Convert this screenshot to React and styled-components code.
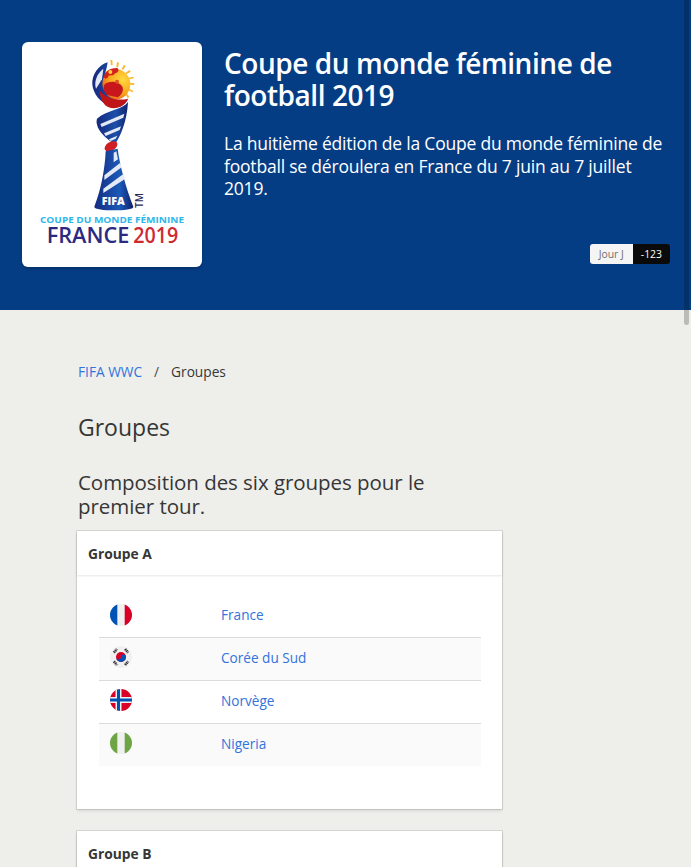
import styled, { createGlobalStyle } from "styled-components"

const GlobalStyle = createGlobalStyle`
html, body {
    margin: 0;
    padding: 0;
    background: #eeeeea;
    scrollbar-width: none;
}
html::-webkit-scrollbar {
    display: none;
}
body {
    font-family: "Open Sans", "Noto Sans", sans-serif;
    color: #363636;
}
`

const Hero = styled.header`
display: flex;
gap: 22px;
box-sizing: border-box;
height: 310px;
padding: 42px 21px 0 22px;
background: #053d85;
color: white;
`

const LogoCard = styled.div`
display: flex;
justify-content: center;
flex: none;
box-sizing: border-box;
width: 180px;
height: 225px;
padding-top: 8px;
background: white;
border-radius: 6px;
box-shadow: 0 2px 3px rgba(10, 10, 10, 0.2);
`

const HeroInfo = styled.div`
display: flex;
flex-direction: column;
flex: 1;
height: 222px;
`

const HeroTitle = styled.h1`
margin: 5px 0 0;
font-size: 28px;
line-height: 32px;
font-weight: 600;
letter-spacing: -0.45px;
`

const HeroText = styled.p`
margin: 21px 0 0;
font-size: 17.5px;
line-height: 22.5px;
letter-spacing: -0.2px;
`

const Tags = styled.div`
display: flex;
align-self: flex-end;
margin-top: auto;
font-size: 10.4px;
line-height: 20px;
`

const Tag = styled.span`
height: 20px;
padding: ${(p) => (p.$dark ? "0 8px" : "0 9px")};
background: ${(p) => (p.$dark ? "#0a0a0a" : "#f5f5f5")};
color: ${(p) => (p.$dark ? "white" : "#6f6f6f")};
border-radius: ${(p) => (p.$dark ? "0 3px 3px 0" : "3px 0 0 3px")};
`

const ScrollThumb = styled.div`
position: fixed;
top: 0;
right: 2px;
width: 5px;
height: 325px;
background: rgba(10, 10, 10, 0.22);
border-radius: 0 0 3px 3px;
`

const Main = styled.main`
width: 425px;
margin-left: 77px;
padding-top: 52px;
`

const Breadcrumb = styled.nav`
display: flex;
align-items: center;
gap: 12px;
padding-left: 1px;
font-size: 13.7px;
line-height: 20px;
`

const CrumbLink = styled.a`
color: #3273dc;
`

const CrumbSep = styled.span`
color: #4a4a4a;
`

const PageTitle = styled.h2`
margin: 29px 0 0 1px;
font-size: 23px;
line-height: 32px;
font-weight: 400;
`

const SubTitle = styled.h3`
margin: 27px 0 0 1px;
width: 400px;
font-size: 20.5px;
line-height: 24px;
font-weight: 400;
letter-spacing: -0.05px;
`

const Card = styled.section`
margin-top: ${(p) => (p.$first ? "13px" : "22px")};
height: 278px;
background: white;
box-shadow: 0 2px 3px rgba(10, 10, 10, 0.1), 0 0 0 1px rgba(10, 10, 10, 0.1);
`

const CardHeader = styled.div`
box-sizing: border-box;
height: 44px;
padding: 0 11px;
font-size: 13.8px;
font-weight: 700;
line-height: 46px;
box-shadow: 0 1px 2px rgba(10, 10, 10, 0.1);
`

const TeamList = styled.div`
margin: 20.25px 21px 0 22px;
`

const TeamRow = styled.div`
display: flex;
align-items: center;
height: 42.75px;
box-sizing: border-box;
padding: 0 0 3px 11px;
background: ${(p) => (p.$even ? "#fafafa" : "white")};
border-bottom: ${(p) => (p.$last ? "none" : "1px solid #dbdbdb")};
`

const FlagCell = styled.div`
display: flex;
width: 111px;
`

const TeamName = styled.a`
color: #3273dc;
font-size: 13.6px;
`

const FlagDisc = styled.svg`
display: block;
width: 22px;
height: 22px;
border-radius: 50%;
`

const Flag = ({ code }) => {
    let body = null
    if (code === "fr") {
        body = <>
            <rect width="22" height="22" fill="#f0f0f0" />
            <rect width="7.3" height="22" fill="#0052b4" />
            <rect x="14.7" width="7.3" height="22" fill="#d80027" />
        </>
    } else if (code === "kr") {
        body = <>
            <rect width="22" height="22" fill="#f0f0f0" />
            <circle cx="11" cy="11" r="5" fill="#d80027" />
            <path d="M6 11a5 5 0 0 0 10 0c0-1.4-1.1-2.5-2.5-2.5S11 9.6 11 11s-1.1 2.5-2.5 2.5S6 12.4 6 11z" fill="#0052b4" />
            <g stroke="#333" strokeWidth="2.6" strokeDasharray="1.4 .6">
                <path d="M3.9 6.6l3-3.6M15.1 3l3 3.6M3.9 15.4l3 3.6M15.1 19l3-3.6" />
            </g>
        </>
    } else if (code === "no") {
        body = <>
            <rect width="22" height="22" fill="#d80027" />
            <rect x="5.5" width="6" height="22" fill="#f0f0f0" />
            <rect y="8" width="22" height="6" fill="#f0f0f0" />
            <rect x="7" width="3" height="22" fill="#0052b4" />
            <rect y="9.5" width="22" height="3" fill="#0052b4" />
        </>
    } else if (code === "ng") {
        body = <>
            <rect width="22" height="22" fill="#f0f0f0" />
            <rect width="7.3" height="22" fill="#6da544" />
            <rect x="14.7" width="7.3" height="22" fill="#6da544" />
        </>
    } else if (code === "de") {
        body = <>
            <rect width="22" height="7.3" fill="#333" />
            <rect y="7.3" width="22" height="7.4" fill="#d80027" />
            <rect y="14.7" width="22" height="7.3" fill="#ffda44" />
        </>
    } else if (code === "cn") {
        body = <>
            <rect width="22" height="22" fill="#d80027" />
            <circle cx="8" cy="8" r="3" fill="#ffda44" />
        </>
    } else if (code === "es") {
        body = <>
            <rect width="22" height="22" fill="#d80027" />
            <rect y="6" width="22" height="10" fill="#ffda44" />
        </>
    } else {
        body = <>
            <rect width="22" height="22" fill="#6da544" />
            <rect width="22" height="7" fill="#d80027" />
            <rect y="15" width="22" height="7" fill="#0052b4" />
        </>
    }
    return <FlagDisc viewBox="0 0 22 22">{body}</FlagDisc>
}

// the trophy and wordmark, drawn in a 465x615 space (3x the crop around the logo)
const Logo = () => (
    <svg width="155" height="205" viewBox="0 0 465 615">
        <defs>
            <linearGradient id="blueBand" x1="0" y1="0" x2="1" y2="0">
                <stop offset="0" stopColor="#16287c" />
                <stop offset="0.6" stopColor="#1c50aa" />
                <stop offset="1" stopColor="#12246e" />
            </linearGradient>
            <linearGradient id="blueBase" x1="0" y1="0" x2="1" y2="0">
                <stop offset="0" stopColor="#152a80" />
                <stop offset="0.65" stopColor="#1b5ab8" />
                <stop offset="1" stopColor="#10206a" />
            </linearGradient>
            <radialGradient id="ball" cx="0.75" cy="0.35" r="0.75">
                <stop offset="0" stopColor="#ffd940" />
                <stop offset="0.55" stopColor="#f9ab1f" />
                <stop offset="1" stopColor="#e8611a" />
            </radialGradient>
        </defs>
        <g fill="#fbb72c">
            <path d="M226 30l6 0 1 16-5 0z" />
            <path d="M246 36l6 2-3 15-5-2z" />
            <path d="M267 44l5 4-8 12-4-3z" />
            <path d="M283 60l4 5-13 8-3-4z" />
            <path d="M296 80l1 5-15 3-1-5z" />
            <path d="M298 100l-1 6-15-3 1-5z" />
            <path d="M295 122l-3 5-13-7 2-4z" />
            <path d="M283 141l-5 3-7-12 4-3z" />
        </g>
        <circle cx="240" cy="103" r="46" fill="url(#ball)" />
        <path d="M204 82c4-16 22-29 42-28 8 4 4 14-6 16-6 10-14 4-20 8-2 10-10 8-16 4z" fill="#d4201f" />
        <circle cx="226" cy="66" r="6" fill="#ffd23a" />
        <path d="M208 104c14-14 44-10 54 6 6 12-4 26-14 32l-36-8c-8-8-8-22-4-30z" fill="#c8161d" />
        <circle cx="246" cy="95" r="6" fill="#e2511a" />
        <path d="M218 37C190 45 170 75 172 103 174 130 195 160 232 172 250 176 270 165 279 148 262 158 240 152 222 140 205 128 198 105 205 85 210 70 216 55 218 37z" fill="url(#blueBand)" />
        <path d="M205 56l-4 32-18 28c-7-20 3-46 22-60z" fill="#e3e9f5" />
        <path d="M193 120c14 24 56 34 86 26-8 22-36 34-58 26-16-6-26-28-28-52z" fill="#bf1519" />
        <path d="M279 156C262 180 215 180 186 206 178 232 210 266 240 282 256 260 276 215 279 156z" fill="url(#blueBand)" />
        <path d="M196 222l72-31-3 12-65 28zM207 250l51-21-4 11-42 18zM222 268l25-11-5 9-15 7z" fill="#e3e9f5" />
        <ellipse cx="228" cy="289" rx="21" ry="13" fill="#cf1f25" transform="rotate(-30 228 289)" />
        <path d="M212 304l36-8c6 50 26 120 47 174 1 8-30 11-58 11s-60-3-59-11c20-50 32-116 34-166z" fill="url(#blueBase)" />
        <path d="M236 308l8-4 5 24-13 9zM208 376l48-38 4 14-52 38zM205 416l60-44 5 15-65 42z" fill="#e3e9f5" />
        <text x="235" y="465" fontFamily="Open Sans, sans-serif" fontSize="32" fontWeight="800" fill="white" textAnchor="middle">FIFA</text>
        <text x="0" y="0" transform="translate(325 474) rotate(-90)" fontFamily="Open Sans, sans-serif" fontSize="30" fontWeight="600" fill="#2a2a5a">TM</text>
        <text x="15" y="518" fontFamily="Open Sans, sans-serif" fontSize="28" fontWeight="700" fill="#2fb7ea" textLength="432" lengthAdjust="spacingAndGlyphs">COUPE DU MONDE FÉMININE</text>
        <text x="35" y="578" fontFamily="Open Sans, sans-serif" fontSize="66" fontWeight="600" fill="#2b2a80" textLength="248" lengthAdjust="spacingAndGlyphs">FRANCE</text>
        <text x="295" y="578" fontFamily="Open Sans, sans-serif" fontSize="66" fontWeight="600" fill="#cf2a32" textLength="135" lengthAdjust="spacingAndGlyphs">2019</text>
    </svg>
)

const groups = [
    {
        name: "Groupe A",
        teams: [
            { code: "fr", name: "France" },
            { code: "kr", name: "Corée du Sud" },
            { code: "no", name: "Norvège" },
            { code: "ng", name: "Nigeria" },
        ],
    },
    {
        name: "Groupe B",
        teams: [
            { code: "de", name: "Allemagne" },
            { code: "cn", name: "Chine" },
            { code: "es", name: "Espagne" },
            { code: "za", name: "Afrique du Sud" },
        ],
    },
]

const App = () => {
    return (
        <>
            <GlobalStyle />
            <Hero>
                <LogoCard>
                    <Logo />
                </LogoCard>
                <HeroInfo>
                    <HeroTitle>Coupe du monde féminine de football 2019</HeroTitle>
                    <HeroText>La huitième édition de la Coupe du monde féminine de football se déroulera en France du 7 juin au 7 juillet 2019.</HeroText>
                    <Tags>
                        <Tag>Jour J</Tag>
                        <Tag $dark>-123</Tag>
                    </Tags>
                </HeroInfo>
            </Hero>
            <ScrollThumb />
            <Main>
                <Breadcrumb>
                    <CrumbLink>FIFA WWC</CrumbLink>
                    <CrumbSep>/</CrumbSep>
                    <span>Groupes</span>
                </Breadcrumb>
                <PageTitle>Groupes</PageTitle>
                <SubTitle>Composition des six groupes pour le premier tour.</SubTitle>
                {groups.map((group, i) => (
                    <Card key={group.name} $first={i === 0}>
                        <CardHeader>{group.name}</CardHeader>
                        <TeamList>
                            {group.teams.map((team, j) => (
                                <TeamRow key={team.code} $even={j % 2 === 1} $last={j === 3}>
                                    <FlagCell>
                                        <Flag code={team.code} />
                                    </FlagCell>
                                    <TeamName>{team.name}</TeamName>
                                </TeamRow>
                            ))}
                        </TeamList>
                    </Card>
                ))}
            </Main>
        </>
    )
}

export default App
